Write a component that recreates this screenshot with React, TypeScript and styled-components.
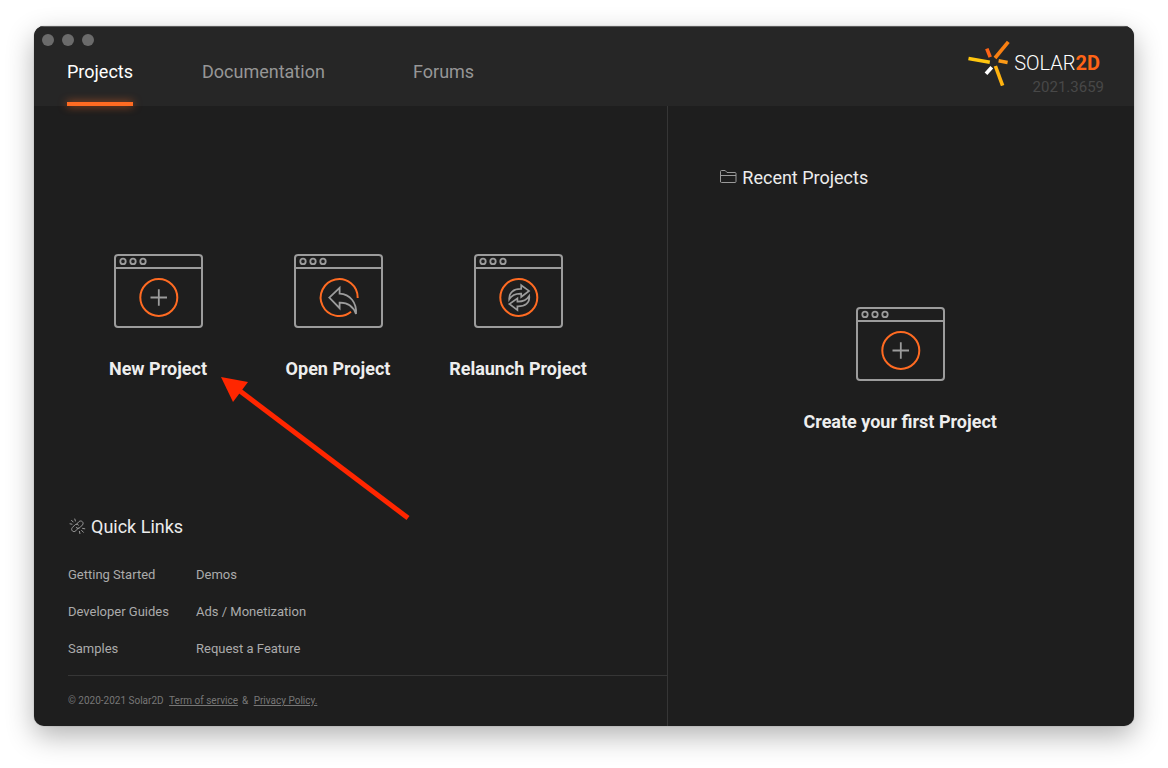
import React from "react";
import styled, { createGlobalStyle } from "styled-components";

const GlobalStyle = createGlobalStyle`
  * { box-sizing: border-box; }
  body {
    margin: 0;
    background: #ffffff;
    font-family: Roboto, "Liberation Sans", sans-serif;
  }
`;

const Desktop = styled.div`
  display: flex;
  min-height: 100vh;
  padding: 26px 34px 42px;
`;

const Window = styled.div`
  flex: 1;
  display: flex;
  flex-direction: column;
  min-width: 0;
  overflow: hidden;
  border-radius: 10px;
  background: #1e1e1e;
  box-shadow: 0 0 1px 0 rgba(0, 0, 0, 0.5), 0 10px 28px rgba(0, 0, 0, 0.3);
`;

const Header = styled.header`
  display: flex;
  justify-content: space-between;
  height: 80px;
  background: #262626;
  box-shadow: inset 0 1px 0 #5c5c5c;
`;

const HeaderLeft = styled.div`
  display: flex;
  flex-direction: column;
`;

const WindowControls = styled.div`
  display: flex;
  gap: 8px;
  padding: 8px 8px 0;
`;

const ControlDot = styled.button`
  width: 12px;
  height: 12px;
  padding: 0;
  border: 0;
  border-radius: 50%;
  background: #6b6b6b;
`;

const Nav = styled.nav`
  flex: 1;
  display: grid;
  grid-template-columns: 135px 211px auto;
  justify-items: start;
  padding-left: 33px;
`;

const NavLink = styled.a<{ $active?: boolean }>`
  display: flex;
  flex-direction: column;
  justify-content: space-between;
  padding-top: 14px;
  font-size: 18px;
  line-height: 24px;
  text-decoration: none;
  color: ${({ $active }) => ($active ? "#ffffff" : "#969696")};

  &::after {
    content: "";
    height: 4px;
    background: ${({ $active }) => ($active ? "#ff6b22" : "transparent")};
    box-shadow: ${({ $active }) => ($active ? "0 0 8px rgba(255, 107, 34, 0.7)" : "none")};
  }
`;

const Brand = styled.div`
  display: flex;
  flex-direction: column;
  align-items: flex-end;
  padding: 14px 30px 0 0;
`;

const BrandRow = styled.div`
  display: flex;
  align-items: center;
  gap: 4px;
  height: 46px;
  padding-right: 4px;
`;

const BrandName = styled.span`
  font-size: 20px;
  line-height: 24px;
  font-weight: 300;
  color: #ffffff;
`;

const BrandAccent = styled.span`
  font-weight: 700;
  color: #ff6416;
`;

const Version = styled.span`
  margin-top: -8px;
  font-size: 15px;
  line-height: 18px;
  color: #484848;
`;

const Body = styled.main`
  flex: 1;
  display: grid;
  grid-template-columns: minmax(0, 19fr) minmax(0, 14fr);
`;

const Primary = styled.section`
  display: flex;
  flex-direction: column;
  justify-content: space-between;
  padding-left: 34px;
`;

const Actions = styled.div`
  position: relative;
  display: grid;
  grid-template-columns: repeat(3, 180px);
  padding-top: 148px;
`;

const Tile = styled.button`
  display: flex;
  flex-direction: column;
  align-items: center;
  gap: 28px;
  padding: 0;
  border: 0;
  background: none;
  font-family: inherit;
  font-size: 18px;
  line-height: 24px;
  font-weight: 700;
  color: #eeeeee;
`;

const Pointer = styled.svg`
  position: absolute;
  left: 152px;
  top: 270px;
  pointer-events: none;
`;

const LinksBlock = styled.div`
  display: flex;
  flex-direction: column;
`;

const SectionTitle = styled.h2`
  display: flex;
  align-items: center;
  gap: 5px;
  margin: 0;
  font-size: 18px;
  line-height: 24px;
  font-weight: 400;
  color: #ececec;
`;

const LinkGrid = styled.div`
  display: grid;
  grid-template-columns: 128px auto;
  justify-content: start;
  row-gap: 17px;
  padding: 26px 0 16px;
`;

const QuickLink = styled.a`
  font-size: 13px;
  line-height: 20px;
  text-decoration: none;
  color: #ababab;
`;

const Footer = styled.footer`
  padding: 17px 0;
  border-top: 1px solid #363636;
  font-size: 10px;
  line-height: 16px;
  color: #777777;
`;

const FooterLink = styled.a`
  margin: 0 4px 0 3px;
  color: inherit;
`;

const Recent = styled.aside`
  display: flex;
  flex-direction: column;
  gap: 117px;
  padding: 60px 0 0 52px;
  border-left: 1px solid #363636;
`;

const EmptyState = styled.div`
  display: flex;
  justify-content: center;
  padding-right: 54px;
`;

type Glyph = "plus" | "open" | "relaunch";

const ProjectIcon = ({ glyph }: { glyph: Glyph }) => (
  <svg width="90" height="75" viewBox="-1 0 90 75" fill="none" stroke="#9c9c9c" strokeWidth="2" aria-hidden="true">
    <rect x="1" y="1" width="87" height="72" rx="3" />
    <path d="M1 14H88" />
    <g strokeWidth="1.8">
      <circle cx="9" cy="7.4" r="2.7" />
      <circle cx="19" cy="7.4" r="2.7" />
      <circle cx="29" cy="7.4" r="2.7" />
    </g>
    {glyph === "open" ? (
      <path d="M63.7 44A18.5 18.5 0 1 0 57 57.8" stroke="#ff6b22" />
    ) : (
      <circle cx="44.8" cy="43.5" r="18.5" stroke="#ff6b22" />
    )}
    {glyph === "plus" && <path d="M36.5 43.5H53M44.8 35.2V51.8" strokeWidth="1.8" />}
    {glyph === "open" && (
      <path
        d="M35.3 43.6L45.6 33.8V39.6C56 40.2 63 48.5 62 60C59 51.5 54 48.4 45.6 48.6V54.2Z"
        strokeWidth="1.8"
      />
    )}
    {glyph === "relaunch" && (
      <g strokeWidth="1.7">
        <path d="M35.2 45.4C34.8 38.6 39.5 34.7 47.2 34.9V31.2L55 36.9L47.2 42.9V39.6C41.5 39.4 37.6 41.4 35.2 45.4Z" />
        <path d="M55.2 42C56 48.8 51.2 52.6 43.4 52.4V56.1L35.4 50L43.4 44.4V47.6C49 47.7 52.8 46 55.2 42Z" />
      </g>
    )}
  </svg>
);

const SolarMark = () => (
  <svg width="42" height="46" viewBox="0 0 42 46" fill="none" strokeWidth="3.6" aria-hidden="true">
    <path d="M0.500 18.400L21.800 22.200" stroke="#ffc60f" />
    <path d="M18.800 8.600L22.200 17.200" stroke="#ff6416" />
    <path d="M40.300 1.800L27 18" stroke="#f98012" />
    <path d="M30.600 20.800L39.600 22.600" stroke="#fb9a17" />
    <path d="M27.400 26L34.600 45.600" stroke="#ffb30f" />
    <path d="M23.800 27.200L18 33.800" stroke="#ffffff" />
  </svg>
);

const LinkIcon = () => (
  <svg width="18" height="18" viewBox="0 0 18 18" fill="none" stroke="#9a9a9a" strokeLinecap="round" aria-hidden="true">
    <path d="M8.2 6.600L10.900 3.700C13.200 1.600 16.600 4.600 14.400 7L11.900 9.600C10.800 10.700 9.200 10.600 8.200 9.500" />
    <path d="M10.400 10L7.800 12.800C5.500 15.100 2.200 12 4.300 9.600L6.800 7C7.900 5.900 9.500 6 10.500 7.100" />
    <path d="M6.800 1L7.400 3M3.500 2.300L5.200 4M2 5.800L4 6.200M14.600 10.400L16.800 10.800M13.600 12.400L15.400 14.300M11.400 13.400L11.900 15.600" />
  </svg>
);

const FolderIcon = () => (
  <svg width="17" height="16" viewBox="0 0 17 16" fill="none" stroke="#9a9a9a" aria-hidden="true">
    <path d="M0.5 12V1.5Q0.5 0.5 1.5 0.5H5.2L7 2.5H15Q16 2.5 16 3.5V11.5Q16 12.5 15 12.5H1.5Q0.5 12.5 0.5 11.5Z" />
    <path d="M0.5 5.5H16" />
  </svg>
);

const tiles: { label: string; glyph: Glyph }[] = [
  { label: "New Project", glyph: "plus" },
  { label: "Open Project", glyph: "open" },
  { label: "Relaunch Project", glyph: "relaunch" },
];

const quickLinks = [
  "Getting Started",
  "Demos",
  "Developer Guides",
  "Ads / Monetization",
  "Samples",
  "Request a Feature",
];

export default function App() {
  return (
    <>
      <GlobalStyle />
      <Desktop>
        <Window>
          <Header>
            <HeaderLeft>
              <WindowControls>
                <ControlDot type="button" aria-label="Close" />
                <ControlDot type="button" aria-label="Minimize" />
                <ControlDot type="button" aria-label="Zoom" />
              </WindowControls>
              <Nav>
                <NavLink href="#projects" $active>Projects</NavLink>
                <NavLink href="#documentation">Documentation</NavLink>
                <NavLink href="#forums">Forums</NavLink>
              </Nav>
            </HeaderLeft>
            <Brand>
              <BrandRow>
                <SolarMark />
                <BrandName>
                  SOLAR<BrandAccent>2D</BrandAccent>
                </BrandName>
              </BrandRow>
              <Version>2021.3659</Version>
            </Brand>
          </Header>
          <Body>
            <Primary>
              <Actions>
                {tiles.map((tile) => (
                  <Tile key={tile.label} type="button">
                    <ProjectIcon glyph={tile.glyph} />
                    {tile.label}
                  </Tile>
                ))}
                <Pointer width="192" height="146" viewBox="0 0 192 146" aria-hidden="true">
                  <path d="M20 15L188 142" stroke="#ff2600" strokeWidth="5" />
                  <path d="M1 1L28 6L13 26Z" fill="#ff2600" />
                </Pointer>
              </Actions>
              <LinksBlock>
                <SectionTitle>
                  <LinkIcon />
                  Quick Links
                </SectionTitle>
                <LinkGrid>
                  {quickLinks.map((label) => (
                    <QuickLink key={label} href="#links">{label}</QuickLink>
                  ))}
                </LinkGrid>
                <Footer>
                  © 2020-2021 Solar2D <FooterLink href="#terms">Term of service</FooterLink>&amp;{" "}
                  <FooterLink href="#privacy">Privacy Policy.</FooterLink>
                </Footer>
              </LinksBlock>
            </Primary>
            <Recent>
              <SectionTitle>
                <FolderIcon />
                Recent Projects
              </SectionTitle>
              <EmptyState>
                <Tile type="button">
                  <ProjectIcon glyph="plus" />
                  Create your first Project
                </Tile>
              </EmptyState>
            </Recent>
          </Body>
        </Window>
      </Desktop>
    </>
  );
}
